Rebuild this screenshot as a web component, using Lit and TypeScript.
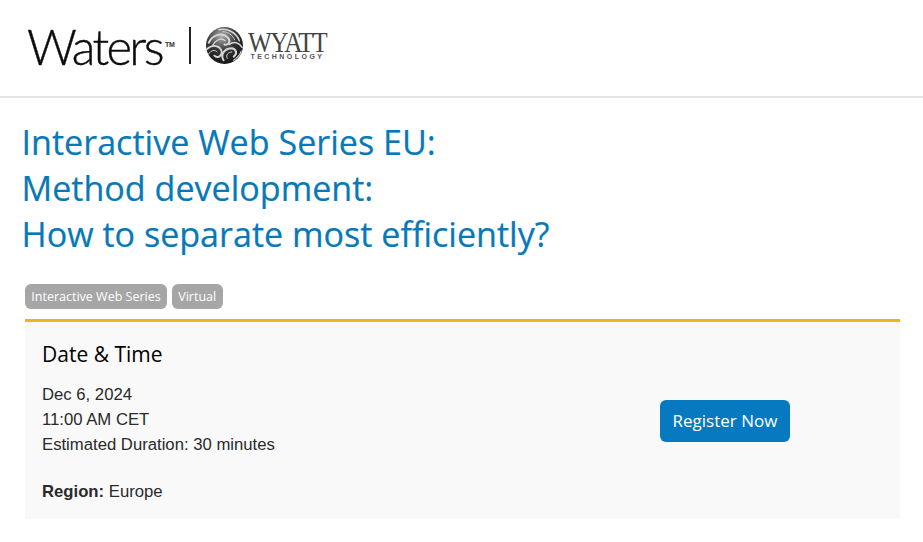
import { LitElement, html, css } from "lit";
import { customElement } from "lit/decorators.js";

@customElement("app-root")
export class AppRoot extends LitElement {
  static styles = css`
    :host { display: block; width: 923px; height: 542px; background: #fff; overflow: hidden; font-family: "Open Sans", sans-serif; }
    .header { border-bottom: 2px solid #e4e4e4; display: flex; align-items: flex-start; padding: 27px 0 0 27px; height: 69px; }
    .logo { display: flex; align-items: flex-start; height: 38px; }
    .waters { font-family: "Lato", sans-serif; font-weight: 300; font-size: 49px; line-height: 38px; letter-spacing: -2.7px; color: #0d0d0d; -webkit-text-stroke: 0.4px #0d0d0d; width: 138px; white-space: nowrap; }
    .tm { font-family: "Liberation Sans", sans-serif; font-size: 7px; font-weight: 700; line-height: 8px; margin-top: 14px; color: #333; letter-spacing: -0.2px; width: 12px; }
    .sep { width: 1.5px; height: 37px; background: #222; margin: 0 15px 0 12px; }
    .ball { width: 37px; height: 37px; flex: none; }
    .wy { display: flex; flex-direction: column; margin: 5px 0 0 5px; width: 80px; }
    .wyatt { font-family: "Liberation Serif", serif; font-size: 29px; line-height: 21px; letter-spacing: -1.7px; color: #444; white-space: nowrap; transform: scaleX(0.87); transform-origin: left center; }
    .tech { font-family: "Liberation Sans", sans-serif; font-size: 7px; font-weight: 700; line-height: 7px; letter-spacing: 2.45px; color: #555; margin-left: 3px; white-space: nowrap; }
    h1 { margin: 21px 0 0 21.5px; font-weight: 400; font-size: 34.1px; line-height: 46px; color: #0679b9; -webkit-text-stroke: 0.2px #0679b9; }
    .tags { display: flex; gap: 5px; margin: 27px 0 0 25px; align-items: flex-start; }
    .tag { background: #a6a6a6; color: #fff; font-size: 12.5px; line-height: 17px; padding: 4px 6.3px; border-radius: 6px; }
    .card { margin: 10px 23px 0 25px; height: 200px; box-sizing: border-box; border-top: 3px solid #ebb71c; background: #f9f9f9; padding: 0 17px; display: flex; }
    .left { width: 618px; }
    h2 { margin: 18px 0 0; font-weight: 400; font-size: 21px; line-height: 28px; color: #000; }
    .info { margin-top: 14px; font-family: "Liberation Sans", sans-serif; font-size: 16.7px; line-height: 25px; color: #2a2a2a; }
    .region { margin-top: 22px; font-family: "Liberation Sans", sans-serif; font-size: 16.7px; line-height: 25px; color: #2a2a2a; }
    .btn { align-self: flex-start; margin-top: 78px; background: #0679c1; color: #fff; font-size: 17px; line-height: 22px; padding: 10px 12.5px; border-radius: 6px; white-space: nowrap; }
  `;
  render() {
    return html`
      <div class="header">
        <div class="logo">
          <span class="waters">Waters</span><span class="tm">TM</span>
          <span class="sep"></span>
          <svg class="ball" viewBox="0 0 40 40">
            <defs>
              <radialGradient id="g" cx="0.42" cy="0.25" r="0.8"><stop offset="0" stop-color="#b0b0b0"/><stop offset="0.5" stop-color="#333"/><stop offset="1" stop-color="#141414"/></radialGradient>
            </defs>
            <circle cx="20" cy="20" r="20" fill="url(#g)"/>
            <g fill="none" stroke="#d6d6d6" stroke-linecap="round">
              <path d="M3 17C7 8 18 5 24 12C27 16 24 20 20 19" stroke-width="2.2"/>
              <path d="M7 20C10 14 17 11 21 15" stroke-width="1.2"/>
              <path d="M14 3C23 1 33 6 36 15" stroke-width="1.6"/>
              <path d="M18 5C24 5 29 9 31 14" stroke-width="1"/>
              <path d="M1 24C7 18 16 20 17 27C17 32 12 34 9 31" stroke-width="2"/>
              <path d="M3 29C5 25 10 24 12 27" stroke-width="1"/>
              <path d="M19 36C15 30 20 23 28 23C33 24 34 29 30 32" stroke-width="2.2"/>
              <path d="M23 34C21 30 24 27 28 27" stroke-width="1"/>
              <path d="M25 19C30 15 36 17 39 22" stroke-width="1.6"/>
              <path d="M30 36C34 33 37 30 38 26" stroke-width="1.2"/>
            </g>
          </svg>
          <div class="wy"><span class="wyatt">WYATT</span><span class="tech">TECHNOLOGY</span></div>
        </div>
      </div>
      <h1>Interactive Web Series EU:<br />Method development:<br />How to separate most efficiently?</h1>
      <div class="tags"><span class="tag">Interactive Web Series</span><span class="tag">Virtual</span></div>
      <div class="card">
        <div class="left">
          <h2>Date &amp; Time</h2>
          <div class="info">Dec 6, 2024<br />11:00 AM CET<br />Estimated Duration: 30 minutes</div>
          <div class="region"><b>Region:</b> Europe</div>
        </div>
        <div class="btn">Register Now</div>
      </div>
    `;
  }
}
